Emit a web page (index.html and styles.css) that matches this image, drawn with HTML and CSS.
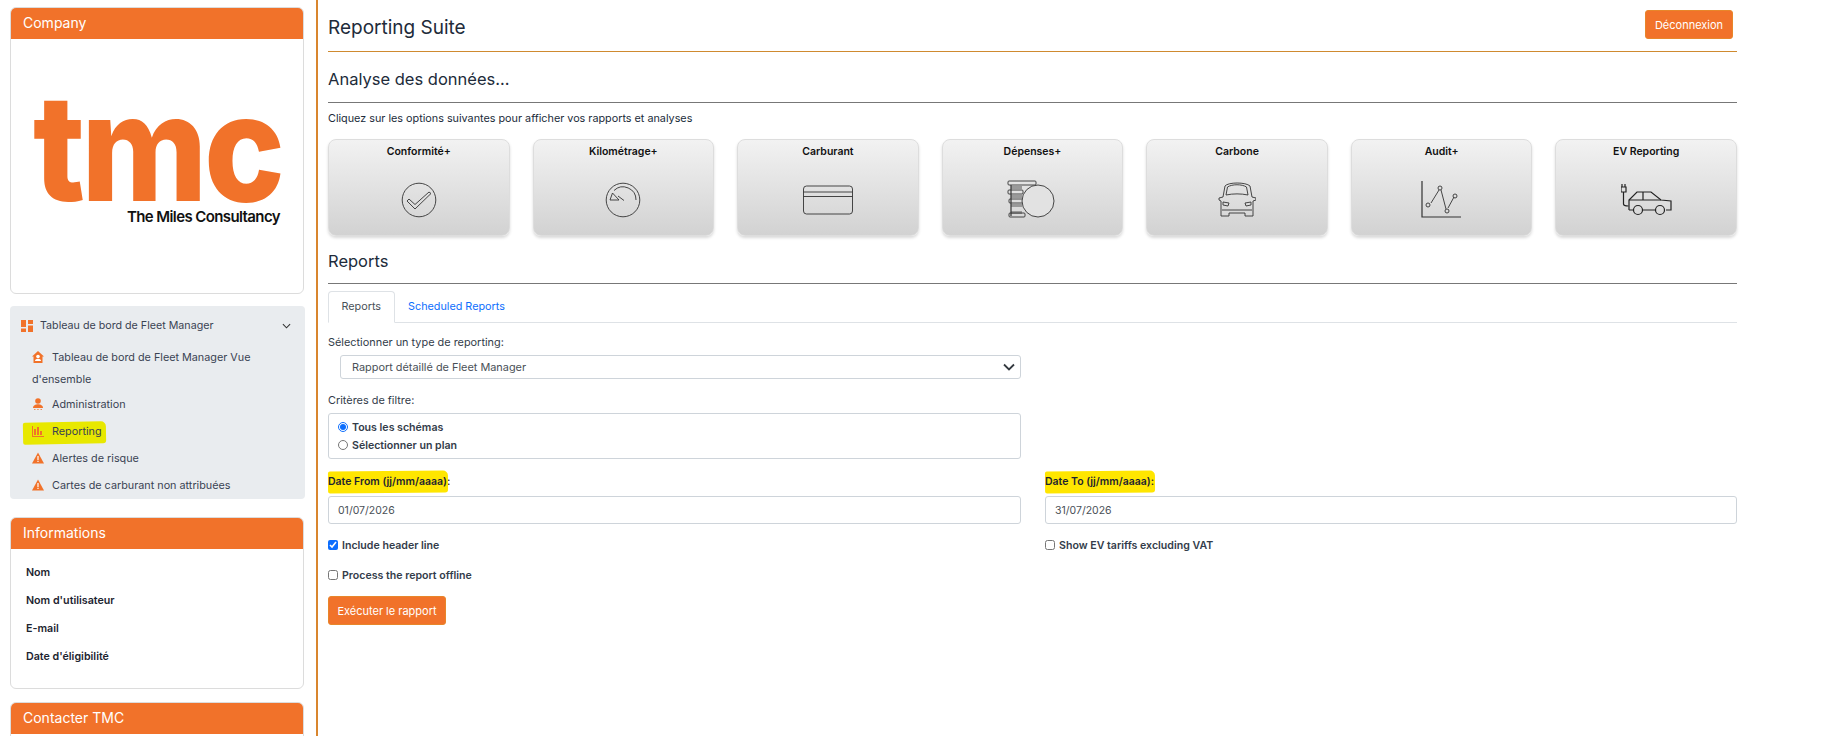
FILE: index.html
```html
<!DOCTYPE html>
<html lang="fr">
<head>
    <meta charset="UTF-8">
    <title>Reporting Suite</title>
    <link rel="stylesheet" href="styles.css">
</head>
<body>

    <aside class="sidebar">
        <div class="card company">
            <div class="card-header">Company</div>
            <div class="logo">
                <div class="logo-mark">tmc</div>
                <div class="logo-name">The Miles Consultancy</div>
            </div>
        </div>

        <nav class="nav">
            <div class="nav-head">
                <svg class="nav-icon" viewBox="0 0 12 12"><path d="M0 0h5v7H0zM7 0h5v4H7zM0 8.500h5V12H0zM7 5.500h5V12H7z"/></svg>
                <span>Tableau de bord de Fleet Manager</span>
                <svg class="chevron" viewBox="0 0 10 6"><path d="M1 1l4 4 4-4"/></svg>
            </div>
            <div class="nav-item tall">
                <svg class="nav-icon" viewBox="0 0 12 12"><path d="M6 0l6 5.500h-1.500V12h-9V5.500H0z"/><circle cx="6" cy="5.500" r="1.800" fill="#fff"/><path d="M3 10c0-3 6-3 6 0z" fill="#fff"/></svg>
                Tableau de bord de Fleet Manager Vue d'ensemble
            </div>
            <div class="nav-item">
                <svg class="nav-icon" viewBox="0 0 12 12"><circle cx="6" cy="3" r="2.800"/><path d="M1 10c0-5 10-5 10 0z"/><path d="M2 11.200h1.500v.8H2zM5.200 11.200h1.500v.8H5.200zM8.500 11.200H10v.8H8.500z"/></svg>
                Administration
            </div>
            <div class="nav-item">
                <span class="brush nav-brush"></span>
                <svg class="nav-icon" viewBox="0 0 12 12"><path d="M0 1h1v10h11v1H0zM2 4h2v6H2zM5 2h2v8H5zM8 6h2v4H8z"/></svg>
                Reporting
            </div>
            <div class="nav-item">
                <svg class="nav-icon" viewBox="0 0 12 12"><path d="M6 .5l6 11H0z"/><path d="M5.400 4h1.200v4H5.400zM5.400 8.800h1.200V10H5.400z" fill="#fff"/></svg>
                Alertes de risque
            </div>
            <div class="nav-item">
                <svg class="nav-icon" viewBox="0 0 12 12"><path d="M6 .5l6 11H0z"/><path d="M5.400 4h1.200v4H5.400zM5.400 8.800h1.200V10H5.400z" fill="#fff"/></svg>
                Cartes de carburant non attribuées
            </div>
        </nav>

        <div class="card info">
            <div class="card-header">Informations</div>
            <div class="info-body">
                <div>Nom</div>
                <div>Nom d'utilisateur</div>
                <div>E-mail</div>
                <div>Date d'éligibilité</div>
            </div>
        </div>

        <div class="card contact">
            <div class="card-header">Contacter TMC</div>
        </div>
    </aside>

    <main class="main">
        <header class="topbar">
            <h1>Reporting Suite</h1>
            <button class="btn logout">Déconnexion</button>
        </header>

        <h2 class="section first">Analyse des données...</h2>
        <p class="intro">Cliquez sur les options suivantes pour afficher vos rapports et analyses</p>

        <div class="tiles">
            <div class="tile">
                <div class="tile-title">Conformité+</div>
                <svg width="36" height="36" viewBox="0 0 36 36"><circle cx="18" cy="18" r="16.800"/><path d="M6 19l2-2 6 5.500L28 10l2 1.500L14 27z"/></svg>
            </div>
            <div class="tile">
                <div class="tile-title">Kilométrage+</div>
                <svg width="36" height="36" viewBox="0 0 36 36"><circle cx="18" cy="18" r="16.800"/><path d="M31 18A13 13 0 0 0 9 8.500"/><path d="M5 18l2.500-7L14 18zM13 14l6 4.500"/></svg>
            </div>
            <div class="tile">
                <div class="tile-title">Carburant</div>
                <svg width="52" height="32" viewBox="0 0 52 32"><rect x="1.500" y="2" width="49" height="28" rx="3"/><path d="M1.500 8h49M1.500 12.500h49"/></svg>
            </div>
            <div class="tile">
                <div class="tile-title">Dépenses+</div>
                <svg width="50" height="40" viewBox="0 0 50 40"><path class="stripes" d="M4 6h11v3H4zM4 15h11v3H4zM4 24h11v3H4zM4 31h11v3H4z"/><path class="thick" d="M4 5v31"/><rect x="1" y="1" width="28" height="4" rx="1"/><rect x="1" y="10" width="15" height="4" rx="1"/><rect x="2" y="19" width="14" height="4" rx="1"/><rect x="2" y="33" width="16" height="4" rx="1"/><circle class="coin" cx="31" cy="21" r="16"/></svg>
            </div>
            <div class="tile">
                <div class="tile-title">Carbone</div>
                <svg width="38" height="35" viewBox="0 0 38 35"><path d="M3 34h8v-3h16v3h8V19l3-1v-2l-4-1-2-11C28 0 10 0 7 4L5 15l-4 1v2l2 1z"/><path d="M8 13l1.500-8C14 2 24 2 28.500 5L30 13C23 11.500 15 11.500 8 13z"/><path d="M5 20l6 1-1 3-5-1zM33 20l-6 1 1 3 5-1zM4 28h30"/></svg>
            </div>
            <div class="tile">
                <div class="tile-title">Audit+</div>
                <svg width="44" height="38" viewBox="0 0 44 38"><path class="thick" d="M2 0v36h39"/><path d="M11 22l8-13M21 9l5 19M28 27l6-11"/><circle cx="8" cy="24" r="2"/><circle cx="20" cy="7" r="2"/><circle cx="27" cy="30" r="2"/><circle cx="35" cy="15" r="2"/></svg>
            </div>
            <div class="tile">
                <div class="tile-title">EV Reporting</div>
                <svg class="ev" width="51" height="32" viewBox="0 0 51 32"><path d="M1 0v3M4 0v3M0 3h5v5H0zM2.500 8v12c0 2 2 2 5 2"/><path d="M8 26v-10l8-8h14l10 8 10 1v9h-5M12 26H8M21.500 26h13"/><path d="M8 16h32M22 8v8"/><circle cx="17" cy="26" r="4.500"/><circle cx="39" cy="26" r="4.500"/></svg>
            </div>
        </div>

        <h2 class="section reports">Reports</h2>

        <div class="tabs">
            <div class="tab active">Reports</div>
            <div class="tab">Scheduled Reports</div>
        </div>

        <label class="field-label type-label">Sélectionner un type de reporting:</label>
        <div class="two-cols">
            <select class="type-select">
                <option>Rapport détaillé de Fleet Manager</option>
            </select>
        </div>

        <label class="field-label filter-label">Critères de filtre:</label>
        <div class="two-cols">
            <div class="filter-box">
                <label class="check"><input type="radio" name="plan" checked> Tous les schémas</label>
                <label class="check"><input type="radio" name="plan"> Sélectionner un plan</label>
            </div>
        </div>

        <div class="two-cols dates">
            <div>
                <label class="date-label"><span class="marked"><span class="brush"></span>Date From (jj/mm/aaaa)</span>:</label>
                <input class="date-input" type="text" value="01/07/2026">
            </div>
            <div>
                <label class="date-label"><span class="marked"><span class="brush"></span>Date To (jj/mm/aaaa):</span></label>
                <input class="date-input" type="text" value="31/07/2026">
            </div>
        </div>

        <div class="two-cols options">
            <label class="check"><input type="checkbox" checked> Include header line</label>
            <label class="check"><input type="checkbox"> Show EV tariffs excluding VAT</label>
            <label class="check"><input type="checkbox"> Process the report offline</label>
        </div>

        <button class="btn run">Exécuter le rapport</button>
    </main>

</body>
</html>
```

FILE: styles.css
```css
* {
    box-sizing: border-box;
    margin: 0;
    padding: 0;
    font-family: Inter, "Noto Sans", sans-serif;
}

html, body {
    height: 736px;
    overflow: hidden;
}

body {
    display: flex;
    background: white;
    color: #212b3a;
    font-size: 11px;
}

.sidebar {
    width: 318px;
    height: 736px;
    flex-shrink: 0;
    padding: 7px 12px 0 10px;
    border-right: 2px solid #d9862e;
    overflow: hidden;
}

.card {
    border: 1px solid #dcdcdc;
    border-radius: 6px;
    overflow: hidden;
    background: white;
}

.card-header {
    height: 31px;
    padding-left: 12px;
    background: #f1722a;
    color: white;
    font-size: 14px;
    line-height: 30px;
}

.company {
    height: 287px;
}

.logo {
    margin-top: 59px;
    padding-left: 22px;
    width: 270px;
}

.logo-mark {
    height: 105px;
    font-size: 148px;
    font-weight: 800;
    line-height: 100px;
    letter-spacing: -4px;
    color: #f1722a;
    transform: scaleX(0.92);
    transform-origin: left;
}

.logo-name {
    margin-top: 5px;
    text-align: right;
    padding-right: 1px;
    font-size: 15px;
    font-weight: 600;
    line-height: 17px;
    letter-spacing: -0.600px;
    color: #111;
}

.nav {
    width: 295px;
    margin-top: 12px;
    background: #e9ecef;
    border-radius: 4px;
}

.nav-head {
    display: flex;
    align-items: center;
    height: 39px;
    padding: 0 14px 0 11px;
    font-size: 10.700px;
    color: #3a4353;
}

.nav-head span {
    flex: 1;
    margin-left: 7px;
}

.nav-icon {
    width: 12px;
    height: 12px;
    fill: #f1722a;
    flex-shrink: 0;
}

.chevron {
    width: 9px;
    height: 6px;
    fill: none;
    stroke: #333;
    stroke-width: 1.200;
}

.nav-item {
    position: relative;
    z-index: 0;
    height: 27px;
    padding-left: 22px;
    line-height: 27px;
    font-size: 10.800px;
    color: #3a4353;
}

.nav-item .nav-icon {
    margin-right: 5px;
    vertical-align: -2px;
}

.nav-item.tall {
    height: 46px;
    line-height: 22px;
    padding-top: 2px;
}

.brush {
    position: absolute;
    z-index: -1;
    left: 0;
    top: -4px;
    right: -1px;
    bottom: -4px;
    background: #ffe600;
    border-radius: 2px 5px 3px 2px;
    transform: rotate(-0.500deg);
}

.nav-brush {
    left: 13px;
    top: 4px;
    right: auto;
    bottom: auto;
    width: 83px;
    height: 22px;
    background: #e8e800;
    transform: rotate(-1deg);
}

.info {
    height: 172px;
    margin-top: 18px;
}

.info-body {
    padding: 10px 15px 0;
    font-size: 10.700px;
    font-weight: 600;
    color: #1d2430;
}

.info-body div {
    height: 28px;
    line-height: 28px;
}

.contact {
    height: 60px;
    margin-top: 13px;
}

.main {
    width: 1409px;
    margin-left: 10px;
    flex-shrink: 0;
}

.topbar {
    display: flex;
    justify-content: space-between;
    align-items: flex-start;
    height: 52px;
    padding: 10px 4px 0 0;
    border-bottom: 1px solid #cf8a2f;
}

h1 {
    font-size: 19px;
    font-weight: 400;
    line-height: 36px;
}

.btn {
    border: 1px solid #e8862a;
    border-radius: 3px;
    background: #f1722a;
    color: white;
    font-size: 11px;
    font-weight: 400;
}

.logout {
    width: 88px;
    height: 29px;
}

.section {
    border-bottom: 1px solid #777;
    font-size: 16.500px;
    font-weight: 400;
}

.section.first {
    height: 51px;
    padding-top: 17px;
}

.intro {
    margin-top: 9px;
    height: 14px;
    line-height: 14px;
    font-size: 10.800px;
}

.tiles {
    display: grid;
    grid-template-columns: repeat(7, 1fr);
    gap: 23px;
    margin-top: 13px;
}

.tile {
    display: flex;
    flex-direction: column;
    align-items: center;
    height: 97px;
    padding-bottom: 14px;
    border: 1px solid #ddd;
    border-radius: 8px;
    background: linear-gradient(#f2f2f2, #d2d2d2);
    box-shadow: 0 2px 3px rgba(0, 0, 0, 0.15);
}

.tile-title {
    height: 38px;
    flex-shrink: 0;
    padding-top: 5px;
    font-size: 10.500px;
    font-weight: 600;
    line-height: 14px;
    color: #111;
}

.tile svg {
    margin: auto 0;
    fill: none;
    stroke: #333;
    stroke-width: 0.900;
}

.tile svg.ev {
    stroke: #222;
    stroke-width: 1.200;
}

.tile .thick {
    stroke-width: 1.200;
}

.tile .stripes {
    fill: #999;
    stroke: none;
}

.tile .coin {
    fill: #e2e2e2;
}

.section.reports {
    height: 39px;
    margin-top: 9px;
    padding-top: 4px;
    line-height: 25px;
}

.tabs {
    display: flex;
    height: 32px;
    margin-top: 7px;
    border-bottom: 1px solid #dee2e6;
}

.tab {
    height: 31px;
    padding: 0 12.500px;
    border: 1px solid transparent;
    line-height: 29px;
    font-size: 10.800px;
    color: #0d6efd;
}

.tab.active {
    height: 32px;
    border-color: #dee2e6 #dee2e6 white;
    border-radius: 4px 4px 0 0;
    background: white;
    color: #495057;
}

.field-label {
    display: block;
    font-size: 10.900px;
    line-height: 14px;
    color: #333c4a;
}

.type-label {
    margin-top: 12px;
}

.filter-label {
    margin-top: 14px;
}

.two-cols {
    display: grid;
    grid-template-columns: 693px 692px;
    column-gap: 24px;
}

.type-select {
    appearance: none;
    width: 681px;
    height: 24px;
    margin: 6px 0 0 12px;
    padding-left: 11px;
    border: 1px solid #ced4da;
    border-radius: 3px;
    background: white url("data:image/svg+xml,%3Csvg xmlns='http://www.w3.org/2000/svg' viewBox='0 0 12 8'%3E%3Cpath d='M1 1.500l5 5 5-5' fill='none' stroke='%23343a40' stroke-width='1.800'/%3E%3C/svg%3E") no-repeat right 5px center / 12px 8px;
    font-size: 10.900px;
    color: #495057;
}

.filter-box {
    display: flex;
    flex-direction: column;
    gap: 4px;
    height: 46px;
    margin-top: 6px;
    padding: 6px 9px;
    border: 1px solid #ced4da;
    border-radius: 3px;
}

.check {
    display: flex;
    align-items: center;
    gap: 4px;
    height: 14px;
    font-size: 10.600px;
    font-weight: 600;
    color: #333c4a;
}

.check input {
    width: 10px;
    height: 10px;
    margin: 0;
    accent-color: #0d6efd;
}

.dates {
    margin-top: 16px;
}

.date-label {
    display: block;
    height: 14px;
    line-height: 14px;
    font-size: 10.500px;
    font-weight: 600;
    color: #1d2430;
}

.marked {
    position: relative;
    z-index: 0;
    display: inline-block;
}

.date-input {
    display: block;
    width: 100%;
    height: 28px;
    margin-top: 7px;
    padding-left: 9px;
    border: 1px solid #ced4da;
    border-radius: 3px;
    font-size: 10.500px;
    color: #495057;
}

.options {
    margin-top: 14px;
    row-gap: 16px;
}

.run {
    display: block;
    width: 118px;
    height: 29px;
    margin-top: 14px;
}
```
